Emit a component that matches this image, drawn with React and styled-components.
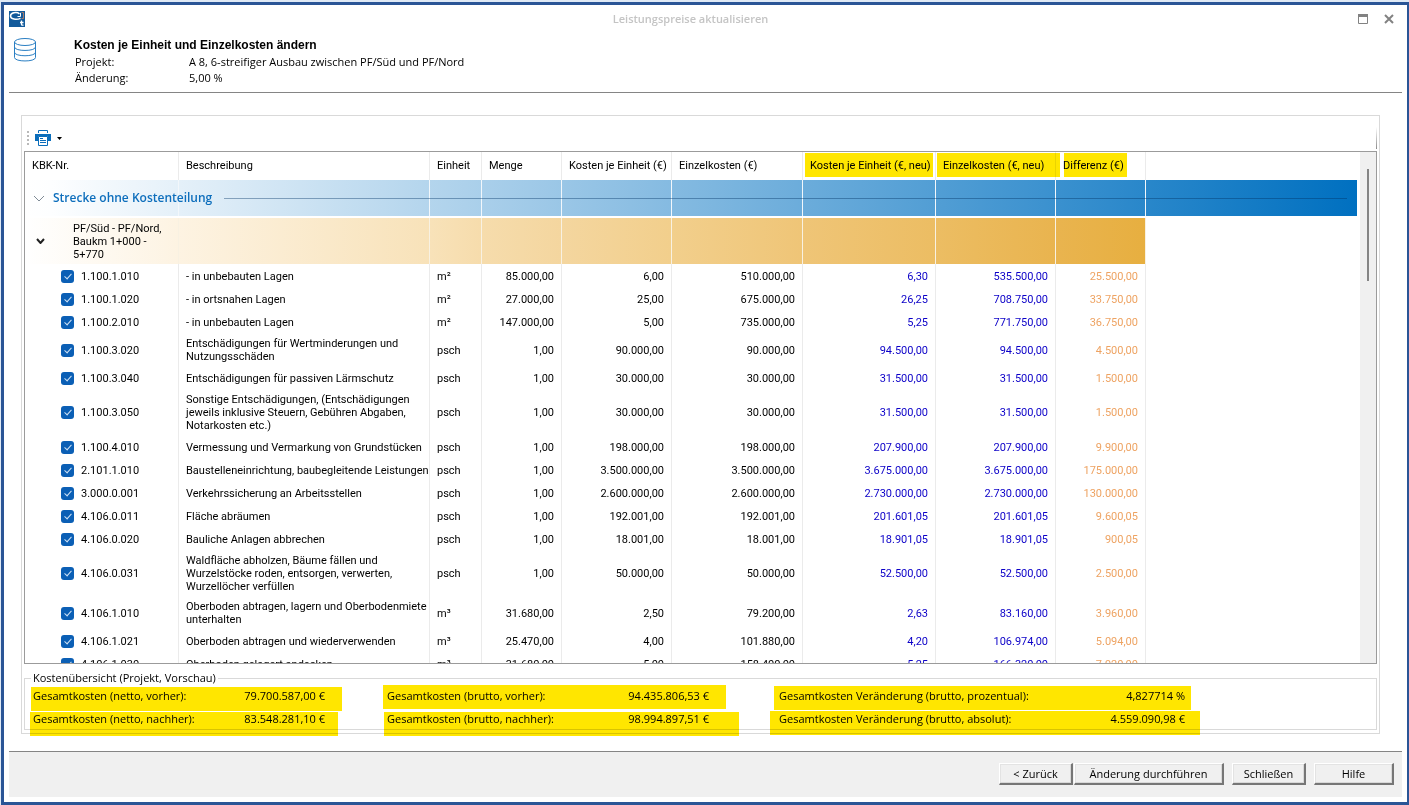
import React from "react";
import styled, { createGlobalStyle, css } from "styled-components";

const UI_FONT = '"Open Sans", "Noto Sans", sans-serif';
const GRID_FONT = 'Roboto, "Liberation Sans", sans-serif';
const HEADING_FONT = '"Liberation Sans", Arial, sans-serif';

const GlobalStyle = createGlobalStyle`
  * { box-sizing: border-box; }
  html, body, #root { height: 100%; }
  body {
    margin: 0;
    background: #dfe9f5;
    color: #000;
    font: 11px/16px ${UI_FONT};
  }
`;

const Page = styled.div`
  height: 100%;
  padding: 2px 0 0 1px;
`;

const Window = styled.main`
  height: 100%;
  display: flex;
  flex-direction: column;
  border: 3px solid #2a5596;
  border-right-width: 2px;
  background: #fff;
  padding: 0 5px 5px;
`;

const TitleBar = styled.header`
  display: flex;
  align-items: center;
  height: 28px;
`;

const Title = styled.h1`
  flex: 1;
  margin: 0;
  padding-left: 6px;
  text-align: center;
  font-size: 11px;
  line-height: 16px;
  font-weight: 600;
  color: #c4c4c4;
`;

const WindowButton = styled.button`
  width: 26px;
  height: 20px;
  padding: 0;
  border: 0;
  background: none;
  color: #828282;
  display: flex;
  align-items: center;
  justify-content: center;
`;

const Intro = styled.section`
  display: flex;
  align-items: flex-start;
  gap: 37px;
  height: 60px;
  padding: 4px 0 0 4px;
  border-bottom: 1px solid #858585;
`;

const Heading = styled.h2`
  margin: 0;
  font: 700 12px/16px ${HEADING_FONT};
`;

const Facts = styled.dl`
  margin: 0;
  padding-left: 1px;
  display: grid;
  grid-template-columns: 114px auto;
  line-height: 16px;
  padding-top: 1px;
  dt, dd { margin: 0; }
`;

const Panel = styled.section`
  flex: 1;
  min-height: 0;
  display: flex;
  flex-direction: column;
  margin: 22px 22px 17px 12px;
  padding: 0 2px 3px;
  border: 1px solid #d9d9d9;
`;

const Toolbar = styled.div`
  flex: none;
  height: 35px;
  display: flex;
  align-items: center;
  padding: 9px 0 0 3px;
`;

const Grip = styled.span`
  width: 2px;
  height: 14px;
  margin-right: 6px;
  background: repeating-linear-gradient(#b9b9b9 0 2px, transparent 2px 4px);
`;

const PrintButton = styled.button`
  display: flex;
  align-items: center;
  gap: 6px;
  padding: 0;
  border: 0;
  background: none;
`;

const ToolbarEnd = styled.span`
  width: 1px;
  height: 22px;
  margin-left: auto;
  background: linear-gradient(#fff, #8c8c8c);
`;

const GridFrame = styled.div`
  flex: 1;
  min-height: 0;
  display: flex;
  border: 1px solid #9b9b9b;
`;

const GridViewport = styled.div`
  flex: 1;
  min-width: 0;
  overflow: auto;
  scrollbar-width: none;
  padding-right: 3px;
`;

const ScrollTrack = styled.div`
  width: 16px;
  background: #f0f0f0;
  padding: 17px 7px;
`;

const ScrollThumb = styled.div`
  width: 2px;
  height: 112px;
  background: #858585;
`;

const CostTable = styled.table`
  width: 100%;
  table-layout: fixed;
  border-collapse: separate;
  border-spacing: 0;
  font: 11px/13px ${GRID_FONT};
`;

const lineColor = css`
  border-right: 1px solid #ebebeb;
  &:last-child { border-right: 0; }
`;

const HeadCell = styled.th`
  ${lineColor}
  height: 28px;
  padding: 0 0 2px 7px;
  position: relative;
  text-align: left;
  font-weight: 400;
  white-space: nowrap;
`;

const Marker = styled.mark`
  position: relative;
  background: none;
  color: inherit;
  &::before {
    content: "";
    position: absolute;
    z-index: 1;
    top: ${(p) => p.$top}px;
    left: ${(p) => p.$left}px;
    width: ${(p) => p.$width}px;
    height: 24px;
    background: #ffe600;
    mix-blend-mode: multiply;
  }
`;

const SectionRow = styled.tr`
  position: relative;
  height: 36px;
  background: linear-gradient(90deg, #fff 0, #fdfeff 2%, #0070c0 100%);
`;

const SectionCell = styled.td`
  ${lineColor}
  padding: 0;
  border-right-color: #f2f7fb;
`;

const SectionTitle = styled.div`
  position: absolute;
  inset: 0 10px 0 8px;
  display: flex;
  align-items: center;
  font: 600 12px/16px ${UI_FONT};
  color: #0d6ebc;
  svg { margin-right: 8px; }
  &::after {
    content: "";
    flex: 1;
    height: 1px;
    margin-left: 12px;
    background: rgba(0, 50, 100, 0.4);
  }
`;

const SpacerRow = styled.tr`
  height: 2px;
  td { padding: 0; }
`;

const SubgroupRow = styled.tr`
  height: 46px;
`;

const SubgroupCell = styled.td`
  padding: 0;
  border-right: 1px solid #f8f1e2;
  background: linear-gradient(90deg, ${(p) => p.$from}, ${(p) => p.$to});
`;

const SubgroupTitle = styled.div`
  display: flex;
  align-items: center;
  padding: 0 10px 0 11px;
  svg { flex: none; margin-right: 28px; }
`;

const ItemRow = styled.tr`
  height: 23px;
`;

const tones = { normal: "#000", next: "#0c00c8", diff: "#eea362" };

const cellPadding = {
  code: "4px 0 3px 36px",
  text: "4px 0 3px 7px",
  number: "4px 7px 3px",
};

const Cell = styled.td`
  ${lineColor}
  padding: ${(p) => cellPadding[p.$kind]};
  text-align: ${(p) => (p.$kind === "number" ? "right" : "left")};
  color: ${(p) => tones[p.$tone || "normal"]};
`;

const ItemLabel = styled.label`
  display: flex;
  align-items: center;
  gap: 7px;
`;

const Tick = styled.input`
  appearance: none;
  width: 13px;
  height: 13px;
  margin: 0;
  border-radius: 3px;
  background: #0b5fb5;
  display: flex;
  justify-content: center;
  &:checked::after {
    content: "";
    width: 3px;
    height: 6px;
    margin-top: 2px;
    border: solid #cfe2f5;
    border-width: 0 1px 1px 0;
    transform: rotate(42deg);
  }
`;

const Overview = styled.fieldset`
  flex: none;
  height: 60px;
  min-width: 0;
  margin: 6px 0 0;
  padding: 1px 8px 0;
  border: 1px solid #d9d9d9;
  display: grid;
  grid-template-columns: 354px 392px auto;
  grid-template-rows: 23px 23px;
  align-items: start;
`;

const Legend = styled.legend`
  padding: 0 2px;
  margin-left: -2px;
  line-height: 16px;
`;

const Total = styled(Marker).attrs({ as: "div" })`
  display: flex;
  justify-content: space-between;
  width: ${(p) => p.$span}px;
  line-height: 18px;
`;

const Footer = styled.footer`
  flex: none;
  height: 46px;
  display: flex;
  padding: 11px 8px 0;
  justify-content: flex-end;
  align-items: flex-start;
  gap: 8px;
  border-top: 1px solid #858585;
  background: #f0f0f0;
`;

const ButtonPair = styled.div`
  display: flex;
  gap: 1px;
`;

const PushButton = styled.button`
  width: ${(p) => p.$width}px;
  height: 22px;
  padding: 0;
  border: solid;
  border-width: 1px 2px 2px 1px;
  border-color: #fff #767676 #767676 #fff;
  background: #f0f0f0;
  box-shadow: inset -1px -1px #d8d8d8, inset 1px 1px #e3e3e3;
  color: #000;
  font: 11px/16px ${UI_FONT};
`;

const AppIcon = () => (
  <svg width="16" height="16" viewBox="0 0 16 16">
    <rect width="16" height="16" fill="#125a9b" />
    <path d="M10.500 2.800C7.500 .5 1.500 1.800 1.500 5s6 4.300 10 2.300" fill="none" stroke="#fff" strokeWidth="1.500" />
    <path d="M11.500 1.800v3.700H8.500" fill="none" stroke="#fff" strokeWidth="1" />
    <path d="M12.500 1.500h2v6h-2" fill="none" stroke="#a77a68" strokeWidth="1" />
    <path d="M12.500 9.500v4q0 1 2 .6M11 11.500h3.500" fill="none" stroke="#fff" strokeWidth="1.300" />
  </svg>
);

const DatabaseIcon = () => (
  <svg width="24" height="26" viewBox="0 0 24 26" fill="none" stroke="#2b7fc3" strokeWidth="1">
    <ellipse cx="12" cy="5" rx="10.500" ry="3.500" />
    <path d="M1.500 5v15.500c0 4.600 21 4.600 21 0V5M1.500 10c0 4.600 21 4.600 21 0M1.500 15.300c0 4.600 21 4.600 21 0" />
  </svg>
);

const PrinterIcon = () => (
  <svg width="16" height="16" viewBox="0 0 16 16">
    <path d="M3.500 3V.5h9V3" fill="none" stroke="#0a6dbb" />
    <path d="M0 4h16v7h-3V6.500H3V11H0z" fill="#0a6dbb" />
    <path d="M3.500 6.500h9v9h-9z" fill="#fff" stroke="#0a6dbb" />
    <path d="M5 8.500h3M5 10.500h6M5 12.500h6" stroke="#0a6dbb" />
  </svg>
);

const CaretIcon = () => (
  <svg width="5" height="3" viewBox="0 0 5 3"><path d="M0 0h5L2.500 3z" fill="#000" /></svg>
);

const MaximizeIcon = () => (
  <svg width="10" height="10" viewBox="0 0 10 10">
    <path d="M.5.5h9v9h-9z" fill="none" stroke="currentColor" />
    <path d="M0 0h10v3H0z" fill="currentColor" />
  </svg>
);

const CloseIcon = () => (
  <svg width="10" height="10" viewBox="0 0 10 10">
    <path d="M1 1l8 8M9 1L1 9" stroke="currentColor" strokeWidth="2" />
  </svg>
);

const Chevron = ({ width, height, color, weight }) => (
  <svg width={width} height={height} viewBox={`0 0 ${width} ${height}`} fill="none" stroke={color} strokeWidth={weight}>
    <path d={`M1 1L${width / 2} ${height - 1}L${width - 1} 1`} />
  </svg>
);

const columns = [
  { label: "KBK-Nr.", width: 154 },
  { label: "Beschreibung", width: 251 },
  { label: "Einheit", width: 52 },
  { label: "Menge", width: 80 },
  { label: "Kosten je Einheit (€)", width: 110 },
  { label: "Einzelkosten (€)", width: 131 },
  { label: "Kosten je Einheit (€, neu)", width: 133, mark: { $left: -5, $width: 128, $top: -6 } },
  { label: "Einzelkosten (€, neu)", width: 120, mark: { $left: -6, $width: 123, $top: -6 } },
  { label: "Differenz (€)", width: 90, mark: { $left: 1, $width: 63, $top: -6 } },
  { label: "" },
];

const subgroupStops = [
  "#ffffff", "#fdf3e2", "#f8e2b9", "#f6dcac", "#f4d69f", "#f2cf8c",
  "#efc577", "#ecbd63", "#e9b44f", "#e7af40",
];

const items = [
  ["1.100.1.010", "- in unbebauten Lagen", "m²", "85.000,00", "6,00", "510.000,00", "6,30", "535.500,00", "25.500,00"],
  ["1.100.1.020", "- in ortsnahen Lagen", "m²", "27.000,00", "25,00", "675.000,00", "26,25", "708.750,00", "33.750,00"],
  ["1.100.2.010", "- in unbebauten Lagen", "m²", "147.000,00", "5,00", "735.000,00", "5,25", "771.750,00", "36.750,00"],
  ["1.100.3.020", "Entschädigungen für Wertminderungen und Nutzungsschäden", "psch", "1,00", "90.000,00", "90.000,00", "94.500,00", "94.500,00", "4.500,00"],
  ["1.100.3.040", "Entschädigungen für passiven Lärmschutz", "psch", "1,00", "30.000,00", "30.000,00", "31.500,00", "31.500,00", "1.500,00"],
  ["1.100.3.050", "Sonstige Entschädigungen, (Entschädigungen jeweils inklusive Steuern, Gebühren Abgaben, Notarkosten etc.)", "psch", "1,00", "30.000,00", "30.000,00", "31.500,00", "31.500,00", "1.500,00"],
  ["1.100.4.010", "Vermessung und Vermarkung von Grundstücken", "psch", "1,00", "198.000,00", "198.000,00", "207.900,00", "207.900,00", "9.900,00"],
  ["2.101.1.010", "Baustelleneinrichtung, baubegleitende Leistungen", "psch", "1,00", "3.500.000,00", "3.500.000,00", "3.675.000,00", "3.675.000,00", "175.000,00"],
  ["3.000.0.001", "Verkehrssicherung an Arbeitsstellen", "psch", "1,00", "2.600.000,00", "2.600.000,00", "2.730.000,00", "2.730.000,00", "130.000,00"],
  ["4.106.0.011", "Fläche abräumen", "psch", "1,00", "192.001,00", "192.001,00", "201.601,05", "201.601,05", "9.600,05"],
  ["4.106.0.020", "Bauliche Anlagen abbrechen", "psch", "1,00", "18.001,00", "18.001,00", "18.901,05", "18.901,05", "900,05"],
  ["4.106.0.031", "Waldfläche abholzen, Bäume fällen und Wurzelstöcke roden, entsorgen, verwerten, Wurzellöcher verfüllen", "psch", "1,00", "50.000,00", "50.000,00", "52.500,00", "52.500,00", "2.500,00"],
  ["4.106.1.010", "Oberboden abtragen, lagern und Oberbodenmiete unterhalten", "m³", "31.680,00", "2,50", "79.200,00", "2,63", "83.160,00", "3.960,00"],
  ["4.106.1.021", "Oberboden abtragen und wiederverwenden", "m³", "25.470,00", "4,00", "101.880,00", "4,20", "106.974,00", "5.094,00"],
  ["4.106.1.030", "Oberboden gelagert andecken", "m³", "31.680,00", "5,00", "158.400,00", "5,25", "166.320,00", "7.920,00"],
];

const totals = [
  { label: "Gesamtkosten (netto, vorher):", value: "79.700.587,00 €", $span: 292, $left: -2, $width: 311, $top: 0 },
  { label: "Gesamtkosten (brutto, vorher):", value: "94.435.806,53 €", $span: 322, $left: -4, $width: 343, $top: -2 },
  { label: "Gesamtkosten Veränderung (brutto, prozentual):", value: "4,827714 %", $span: 406, $left: -5, $width: 417, $top: -1 },
  { label: "Gesamtkosten (netto, nachher):", value: "83.548.281,10 €", $span: 292, $left: -3, $width: 308, $top: 2 },
  { label: "Gesamtkosten (brutto, nachher):", value: "98.994.897,51 €", $span: 322, $left: -3, $width: 355, $top: 2 },
  { label: "Gesamtkosten Veränderung (brutto, absolut):", value: "4.559.090,98 €", $span: 406, $left: -9, $width: 430, $top: 1 },
];

const toneOf = (i) => (i === 8 ? "diff" : i > 5 ? "next" : "normal");

export default function App() {
  return (
    <Page>
      <GlobalStyle />
      <Window>
        <TitleBar>
          <AppIcon />
          <Title>Leistungspreise aktualisieren</Title>
          <WindowButton aria-label="Maximieren"><MaximizeIcon /></WindowButton>
          <WindowButton aria-label="Fenster schließen"><CloseIcon /></WindowButton>
        </TitleBar>
        <Intro>
          <DatabaseIcon />
          <div>
            <Heading>Kosten je Einheit und Einzelkosten ändern</Heading>
            <Facts>
              <dt>Projekt:</dt>
              <dd>A 8, 6-streifiger Ausbau zwischen PF/Süd und PF/Nord</dd>
              <dt>Änderung:</dt>
              <dd>5,00 %</dd>
            </Facts>
          </div>
        </Intro>

        <Panel>
          <Toolbar>
            <Grip />
            <PrintButton aria-label="Drucken"><PrinterIcon /><CaretIcon /></PrintButton>
            <ToolbarEnd />
          </Toolbar>
          <GridFrame>
            <GridViewport>
              <CostTable>
                <colgroup>
                  {columns.map((c, i) => <col key={i} width={c.width} />)}
                </colgroup>
                <thead>
                  <tr>
                    {columns.map((c, i) => (
                      <HeadCell key={i}>
                        {c.mark ? <Marker {...c.mark}>{c.label}</Marker> : c.label}
                      </HeadCell>
                    ))}
                  </tr>
                </thead>
                <tbody>
                  <SectionRow>
                    {columns.map((c, i) => (
                      <SectionCell key={i}>
                        {i === 0 && (
                          <SectionTitle>
                            <Chevron width={12} height={7} color="#7f8b96" weight={1} />
                            Strecke ohne Kostenteilung
                          </SectionTitle>
                        )}
                      </SectionCell>
                    ))}
                  </SectionRow>
                  <SpacerRow><td colSpan={columns.length} /></SpacerRow>
                  <SubgroupRow>
                    {subgroupStops.slice(0, 9).map((from, i) => (
                      <SubgroupCell key={i} $from={from} $to={subgroupStops[i + 1]}>
                        {i === 0 && (
                          <SubgroupTitle>
                            <Chevron width={9} height={6} color="#222" weight={2} />
                            PF/Süd - PF/Nord, Baukm 1+000 - 5+770
                          </SubgroupTitle>
                        )}
                      </SubgroupCell>
                    ))}
                    <td />
                  </SubgroupRow>
                  {items.map((row) => (
                    <ItemRow key={row[0]}>
                      <Cell $kind="code">
                        <ItemLabel><Tick type="checkbox" defaultChecked />{row[0]}</ItemLabel>
                      </Cell>
                      {row.slice(1).map((text, i) => (
                        <Cell key={i} $kind={i > 1 ? "number" : "text"} $tone={toneOf(i + 1)}>{text}</Cell>
                      ))}
                      <Cell $kind="text" />
                    </ItemRow>
                  ))}
                </tbody>
              </CostTable>
            </GridViewport>
            <ScrollTrack><ScrollThumb /></ScrollTrack>
          </GridFrame>
          <Overview>
            <Legend>Kostenübersicht (Projekt, Vorschau)</Legend>
            {totals.map(({ label, value, ...mark }) => (
              <Total key={label} {...mark}><span>{label}</span><span>{value}</span></Total>
            ))}
          </Overview>
        </Panel>

        <Footer>
          <ButtonPair>
            <PushButton $width={74}>&lt; Zurück</PushButton>
            <PushButton $width={150}>Änderung durchführen</PushButton>
          </ButtonPair>
          <PushButton $width={74}>Schließen</PushButton>
          <PushButton $width={80}>Hilfe</PushButton>
        </Footer>
      </Window>
    </Page>
  );
}
